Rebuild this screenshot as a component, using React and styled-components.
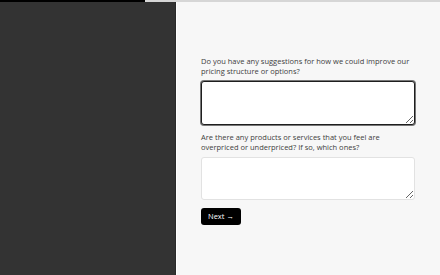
import React from 'react';
import styled, {createGlobalStyle} from 'styled-components'

const Global = createGlobalStyle`
html, body {
  margin: 0;
  padding: 0;
  background: #f7f7f7;
}
#root {
  height: 275px;
}
* {
  box-sizing: border-box;
}
`

const Page = styled.div`
display: flex;
flex-direction: column;
height: 275px;
font-family: "Open Sans", "Liberation Sans", sans-serif;
`

const Progress = styled.div`
height: 2px;
background: #d6d6d6;
flex-shrink: 0;
`

const ProgressFill = styled.div`
height: 100%;
background: #000;
`

const Split = styled.div`
flex: 1;
display: flex;
`

const SidePanel = styled.div`
width: 176px;
background: #333333;
border-right: 1px solid #2a2a2a;
`

const Main = styled.div`
flex: 1;
background: #f7f7f7;
border-left: 1px solid #ffffff;
display: flex;
flex-direction: column;
padding: 54px 25px 0 24px;
`

const Question = styled.label`
display: block;
font-size: 7.5px;
line-height: 10px;
color: #404040;
margin-bottom: 5px;
`

const Answer = styled.textarea`
display: block;
width: 100%;
height: ${p => p.h}px;
margin: 0 0 7px;
padding: 4px;
background: #fff;
border: 1px solid ${p => p.focused ? '#1e1e1e' : '#e2e2e2'};
box-shadow: ${p => p.focused ? '0 0 0 1px #777' : 'none'};
border-radius: 3px;
outline: none;
font-family: inherit;
font-size: 8px;
resize: vertical;
`

const NextButton = styled.button`
align-self: flex-start;
margin-top: 1px;
height: 17px;
padding: 0 7px;
background: #000;
color: #fff;
border: none;
border-radius: 3px;
font-family: inherit;
font-size: 7.5px;
line-height: 17px;
cursor: pointer;
`

const questions = [
    {id: 'q1', text: 'Do you have any suggestions for how we could improve our pricing structure or options?', h: 44, focused: true},
    {id: 'q2', text: 'Are there any products or services that you feel are overpriced or underpriced? If so, which ones?', h: 43, focused: false},
]

const App = () => {
    return (
        <Page>
            <Global/>
            <Progress>
                <ProgressFill style={{width: '33%'}}/>
            </Progress>
            <Split>
                <SidePanel/>
                <Main>
                    {questions.map(q =>
                        <div key={q.id}>
                            <Question htmlFor={q.id}>{q.text}</Question>
                            <Answer id={q.id} h={q.h} focused={q.focused}/>
                        </div>
                    )}
                    <NextButton>Next →</NextButton>
                </Main>
            </Split>
        </Page>
    );
};

export default App;
